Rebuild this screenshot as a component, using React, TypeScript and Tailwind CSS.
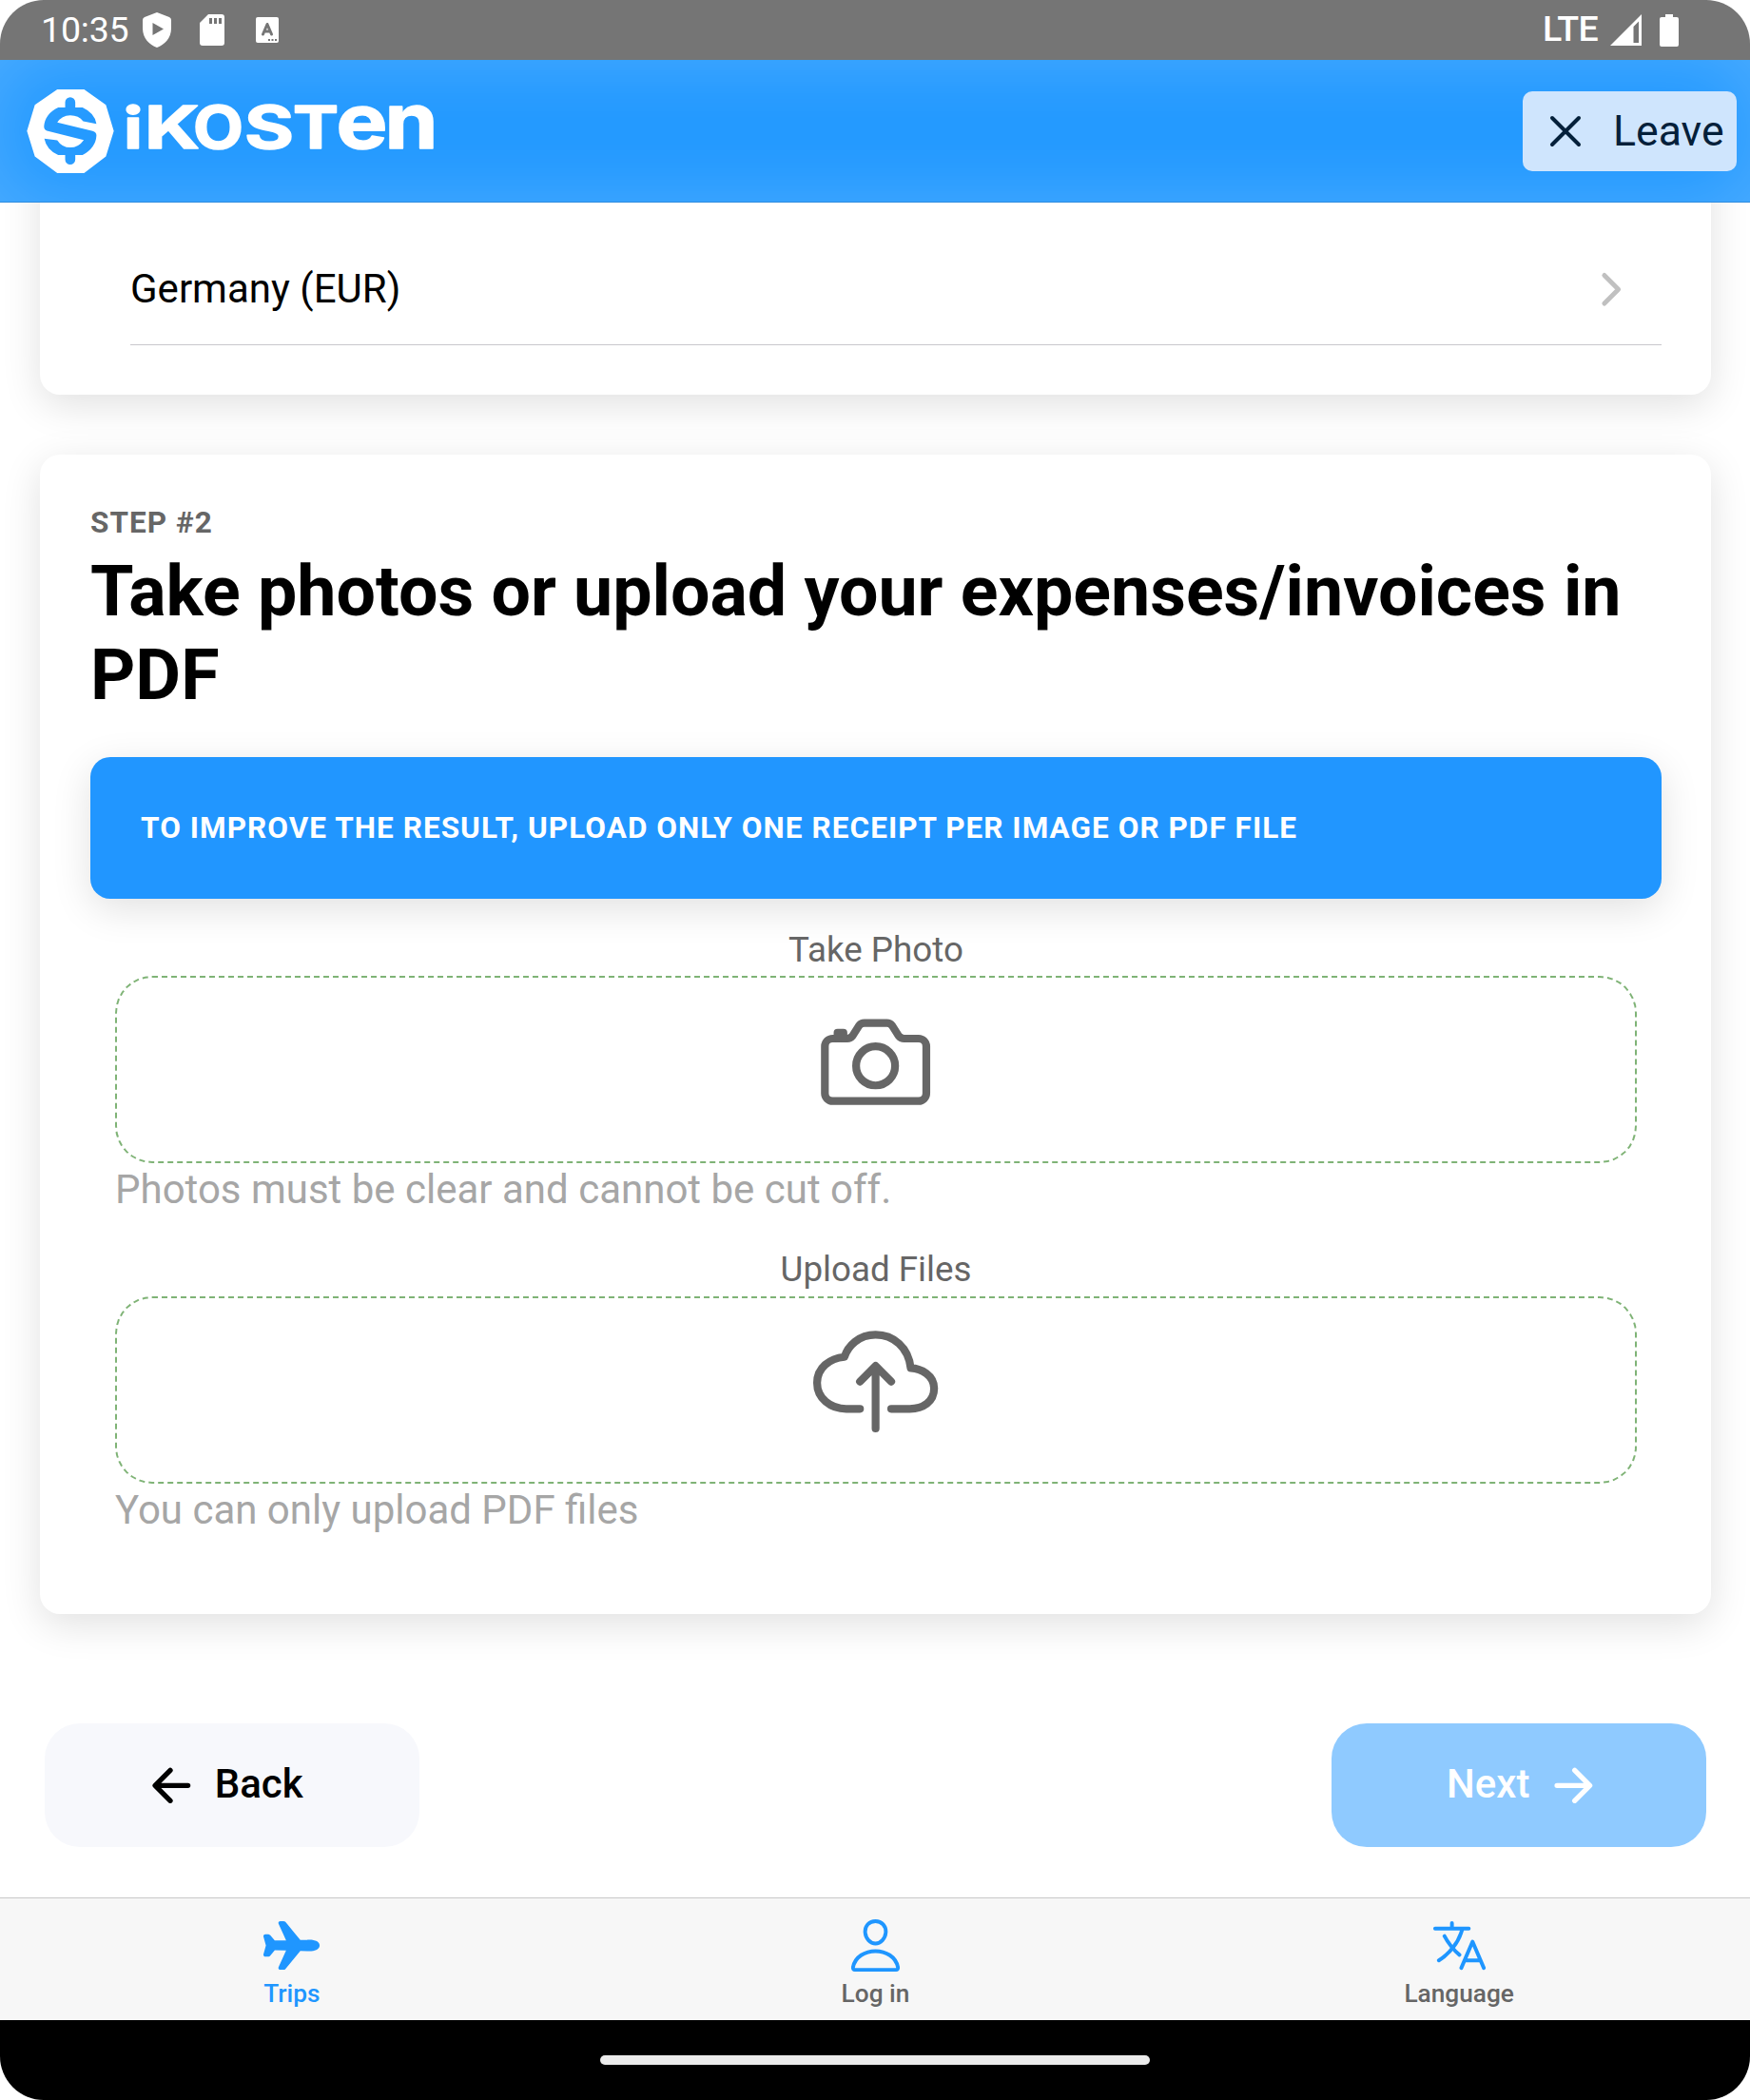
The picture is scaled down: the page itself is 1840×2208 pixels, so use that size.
import React from "react";
import {
  IoAirplane,
  IoArrowBack,
  IoArrowForward,
  IoCameraOutline,
  IoChevronForward,
  IoCloseOutline,
  IoCloudUploadOutline,
  IoLanguageOutline,
  IoPersonOutline,
} from "react-icons/io5";

function StatusBar() {
  return (
    <div className="flex h-[63px] shrink-0 items-center justify-between bg-[#757575] pl-[43px] pr-[75px] text-white">
      <div className="flex items-center">
        <span className="-mt-[2px] w-[107px] whitespace-nowrap text-[37.5px] leading-[44px] tracking-[-0.2px]">10:35</span>
        <svg className="h-[37px] w-[30px]" viewBox="0 0 30 37" fill="currentColor">
          <path fillRule="evenodd" d="M15 0 28 5Q30 6 30 8V17C30 27 23 34 15 37C7 34 0 27 0 17V8Q0 6 2 5ZM10.500 11V24L22 17.500Z" />
        </svg>
        <svg className="ml-[30px] h-[33px] w-[26px]" viewBox="0 0 26 33" fill="currentColor">
          <path fillRule="evenodd" d="M9 0H23Q26 0 26 3V30Q26 33 23 33H3Q0 33 0 30V9ZM10 4V10H13V4ZM15 4V10H18V4ZM20 4V10H23V4Z" />
        </svg>
        <svg className="ml-[33px] h-[27px] w-[24px]" viewBox="0 0 24 27">
          <rect width="24" height="27" rx="2" fill="currentColor" />
          <path d="M7.500 18 12 7.500 16.500 18M9 15H15" fill="none" stroke="#757575" strokeWidth="3" strokeLinecap="round" strokeLinejoin="round" />
          <path d="M13 24H15M16.500 24H18.500M20 24H22" stroke="#757575" strokeWidth="2" />
        </svg>
      </div>
      <div className="flex items-center">
        <span className="-mt-[3px] w-[71px] whitespace-nowrap text-[37.5px] font-medium leading-[44px] tracking-[-0.5px]">LTE</span>
        <svg className="h-[33px] w-[33px]" viewBox="0 0 33 33" fill="currentColor">
          <path fillRule="evenodd" d="M33 0V33H0ZM30 7.500 24.500 13V30H30Z" />
        </svg>
        <svg className="ml-[19px] h-[34px] w-[20px]" viewBox="0 0 20 34" fill="currentColor">
          <path d="M6 0H14V3H18Q20 3 20 5V32Q20 34 18 34H2Q0 34 0 32V5Q0 3 2 3H6Z" />
        </svg>
      </div>
    </div>
  );
}

function Logo() {
  return (
    <div className="flex h-[88px] items-center text-white">
      <svg className="h-[88px] w-[92px]" viewBox="84 281 275 265">
        <path
          fill="currentColor"
          fillRule="evenodd"
          d="M180 281H265L334 330 359 413 334 493 265 546H180L109 493 84 413 109 330ZM205 338V322A16 16 0 0 1 237 322V338H260Q299 356 304 390L262 382Q248 363 221 363T180 386L292 413Q304 417 304 427Q302 466 260 489H237V503A16 16 0 0 1 205 503V489H183Q146 473 139 437L180 442Q195 465 221 465T264 441L147 412Q138 409 138 398Q141 358 183 338Z"
        />
      </svg>
      <svg className="-mt-[25px] ml-[2px] h-[120px] w-[346px]" viewBox="122 65 346 120">
        <text
          y="156"
          fill="currentColor"
          stroke="currentColor"
          strokeWidth="1.500"
          strokeLinejoin="round"
          fontFamily="Inter, sans-serif"
          fontWeight="700"
          fontSize="61.500"
        >
          <tspan x="130" fontFamily="Lato, sans-serif" fontWeight="900" textLength="20" lengthAdjust="spacingAndGlyphs">i</tspan>
          <tspan x="152" textLength="58" lengthAdjust="spacingAndGlyphs">K</tspan>
          <tspan x="203" textLength="53" lengthAdjust="spacingAndGlyphs">O</tspan>
          <tspan x="257" textLength="52" lengthAdjust="spacingAndGlyphs">S</tspan>
          <tspan x="308" textLength="48" lengthAdjust="spacingAndGlyphs">T</tspan>
          <tspan x="353.500" fontSize="80" textLength="54" lengthAdjust="spacingAndGlyphs">e</tspan>
          <tspan x="404.500" fontSize="81" textLength="56" lengthAdjust="spacingAndGlyphs">n</tspan>
        </text>
      </svg>
    </div>
  );
}

function Header() {
  return (
    <header className="relative z-10 flex h-[150px] shrink-0 items-center justify-between border-b border-[#2f8cde] bg-[#2299ff] pl-[28px] pr-[14px] shadow-[inset_0_0_84px_rgba(255,255,255,0.2)]">
      <Logo />
      <button className="flex h-[84px] w-[225px] items-center rounded-[10px] bg-[#cfe5fd] pl-[12.5px] text-[#04203a]">
        <IoCloseOutline className="size-[64px]" />
        <span className="ml-[18.5px] text-[44.6px] leading-[52px]">Leave</span>
      </button>
    </header>
  );
}

const cardShadow = "shadow-[0_10.5px_42px_rgba(0,0,0,0.12)]";

function UploadBox({ label, hint, children }: { label: string; hint: string; children: React.ReactNode }) {
  return (
    <div className="mx-[26px] flex h-[336.1px] flex-col">
      <div className="h-[46px] text-center text-[36.75px] leading-[46px] text-[#666666]">{label}</div>
      <div className="mt-[4.45px] flex h-[197px] items-start justify-center rounded-[39px] border-2 border-dashed border-[#7fb376] pt-[22.5px] text-[#666666]">
        {children}
      </div>
      <div className="mt-[3px] text-[42px] leading-[50px] text-[#a6a6a6]">{hint}</div>
    </div>
  );
}

function Tab({ label, active, children }: { label: string; active?: boolean; children: React.ReactNode }) {
  return (
    <div className="flex flex-1 flex-col items-center pt-[18px] text-[#1f96ff]">
      {children}
      <span className={`mt-[3px] text-[26.25px] font-medium leading-[32px] ${active ? "text-[#1f96ff]" : "text-[#666666]"}`}>
        {label}
      </span>
    </div>
  );
}

export default function App() {
  return (
    <div className="h-[2208px] w-[1840px] bg-white font-['Roboto',sans-serif] text-black">
      <div className="flex h-full flex-col overflow-hidden rounded-[46px]">
        <StatusBar />
        <Header />
        <main className="flex h-[1782px] shrink-0 flex-col">
          <section className={`-mt-[60px] mr-[41px] ml-[42px] h-[262px] shrink-0 rounded-[21px] bg-white pt-[92px] pr-[52px] pl-[95px] ${cardShadow}`}>
            <div className="flex h-[118px] items-center justify-between border-b border-[#c8c7cc] pr-[27px]">
              <span className="text-[42px] leading-[50px]">Germany (EUR)</span>
              <IoChevronForward className="mt-[2px] size-[52.5px] text-[#c0c0c0]" />
            </div>
          </section>

          <section className={`mt-[63px] mr-[41px] ml-[42px] h-[1219px] shrink-0 rounded-[21px] bg-white pt-[53px] pr-[52px] pl-[53px] ${cardShadow}`}>
            <div className="h-[38px] text-[31.5px] font-bold leading-[38px] tracking-[1.05px] text-[#666666]">STEP #2</div>
            <h1 className="mt-[9px] h-[176px] text-[73.5px] font-bold leading-[88.2px]">
              Take photos or upload your expenses/invoices in PDF
            </h1>
            <div className={`mt-[42px] flex h-[149px] items-center rounded-[21px] bg-[#2196ff] px-[53px] text-[31.5px] font-bold tracking-[1.05px] text-white ${cardShadow}`}>
              TO IMPROVE THE RESULT, UPLOAD ONLY ONE RECEIPT PER IMAGE OR PDF FILE
            </div>
            <div className="mt-[31px]">
              <UploadBox label="Take Photo" hint="Photos must be clear and cannot be cut off.">
                <IoCameraOutline className="size-[131.25px]" />
              </UploadBox>
              <UploadBox label="Upload Files" hint="You can only upload PDF files">
                <IoCloudUploadOutline className="size-[131.25px]" />
              </UploadBox>
            </div>
          </section>

          <div className="mt-[115px] flex justify-between pr-[46px] pl-[47px]">
            <button className="flex h-[130px] w-[394px] items-center rounded-[37px] bg-[#f7f8fc] pl-[105px] text-[42px] font-medium">
              <IoArrowBack className="size-[56.7px]" />
              <span className="-mt-[2px] ml-[17px] leading-[50px]">Back</span>
            </button>
            <button className="flex h-[130px] w-[394px] items-center rounded-[37px] bg-[#8fcaff] pl-[121px] text-[42px] font-medium text-white">
              <span className="-mt-[2px] leading-[50px]">Next</span>
              <IoArrowForward className="ml-[18px] size-[56.7px]" />
            </button>
          </div>
        </main>
        <nav className="-mr-px flex h-[129px] shrink-0 border-t border-[#c8c8c8] bg-[#f7f7f7]">
          <Tab label="Trips" active>
            <IoAirplane className="size-[63px]" />
          </Tab>
          <Tab label="Log in">
            <IoPersonOutline className="size-[63px]" />
          </Tab>
          <Tab label="Language">
            <IoLanguageOutline className="size-[63px]" />
          </Tab>
        </nav>
        <div className="flex h-[84px] shrink-0 items-center justify-center bg-black">
          <div className="h-[10px] w-[578px] rounded-[5px] bg-[#ebebeb]" />
        </div>
      </div>
    </div>
  );
}
